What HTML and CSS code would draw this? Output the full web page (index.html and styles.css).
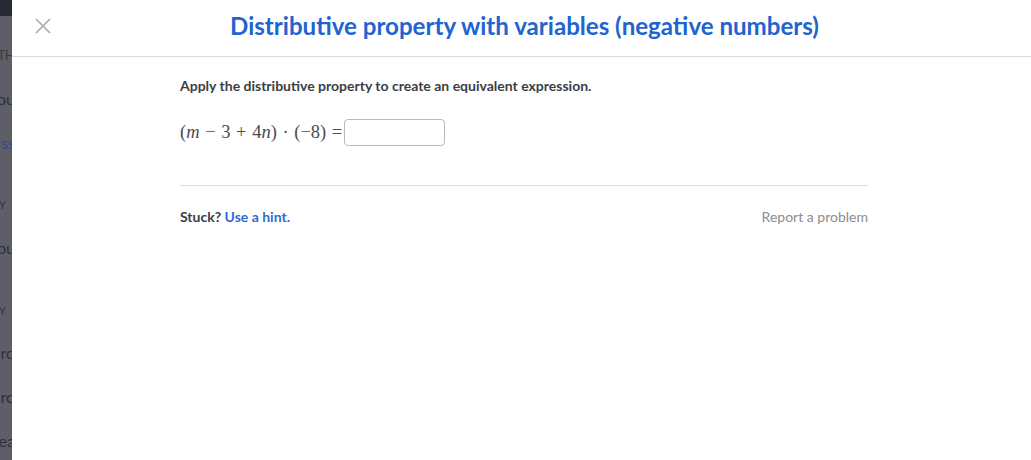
FILE: index.html
```html
<!DOCTYPE html>
<html>
<head>
<meta charset="utf-8">
<link rel="stylesheet" href="styles.css">
</head>
<body>
<div class="page">
  <aside class="backdrop">
    <div class="backdrop-top"></div>
    <div class="frag frag-th">TH</div>
    <div class="frag frag-ou">ou</div>
    <div class="frag frag-ss">ss</div>
    <div class="frag frag-y">Y</div>
    <div class="frag frag-ou2">ou</div>
    <div class="frag frag-y2">Y</div>
    <div class="frag frag-ro">ro</div>
    <div class="frag frag-ro2">ro</div>
    <div class="frag frag-ea">ea</div>
  </aside>
  <main class="modal">
    <header class="modal-header">
      <button class="close" aria-label="Close">
        <svg width="16" height="16" viewBox="0 0 16 16"><path d="M1 1 L15 15 M15 1 L1 15" stroke="#a9aaad" stroke-width="1.6" fill="none"/></svg>
      </button>
      <h1 class="title">Distributive property with variables (negative numbers)</h1>
    </header>
    <section class="content">
      <p class="prompt">Apply the distributive property to create an equivalent expression.</p>
      <div class="equation">
        <span class="math">(<i>m</i> − 3 + 4<i>n</i>) · (−8) =</span>
        <span class="answer"></span>
      </div>
      <div class="divider"></div>
      <div class="footer">
        <span class="stuck">Stuck? <a class="hint">Use a hint.</a></span>
        <a class="report">Report a problem</a>
      </div>
    </section>
  </main>
</div>
</body>
</html>
```

FILE: styles.css
```css
* { box-sizing: border-box; }
html, body { margin: 0; padding: 0; }
body {
  width: 1031px;
  height: 460px;
  overflow: hidden;
  background: #fff;
  font-family: Lato, "Noto Sans", sans-serif;
  color: #21242c;
}
.page {
  display: flex;
  height: 460px;
}
.backdrop {
  width: 12px;
  flex: none;
  background: #5e5f66;
  overflow: hidden;
  display: flex;
  flex-direction: column;
  align-items: flex-end;
  font-family: Lato, sans-serif;
  color: #2f313a;
  font-size: 16px;
  line-height: 20px;
}
.backdrop-top {
  width: 12px;
  height: 16px;
  background: #272a33;
  flex: none;
}
.frag { white-space: nowrap; margin-right: -3px; }
.frag-th { margin-top: 29px; font-size: 13px; color: #3a3c45; }
.frag-ou { margin-top: 24px; }
.frag-ss { margin-top: 24px; color: #2f4a8a; }
.frag-y { margin-top: 42px; font-size: 11px; align-self: flex-start; margin-left: -1px; }
.frag-ou2 { margin-top: 23px; }
.frag-y2 { margin-top: 43px; font-size: 11px; align-self: flex-start; margin-left: -1px; }
.frag-ro { margin-top: 22px; }
.frag-ro2 { margin-top: 24px; }
.frag-ea { margin-top: 24px; }

.modal {
  flex: 1;
  display: flex;
  flex-direction: column;
}
.modal-header {
  height: 57px;
  border-bottom: 1px solid #dadadd;
  display: flex;
  align-items: center;
  position: relative;
}
.close {
  position: absolute;
  left: 22px;
  top: 17px;
  width: 18px;
  height: 18px;
  padding: 0;
  border: 0;
  background: none;
  display: flex;
  align-items: center;
  justify-content: center;
}
.title {
  flex: 1;
  margin: 0 0 6px 0;
  padding-left: 6px;
  text-align: center;
  font-size: 24.1px;
  font-weight: 700;
  color: #2164d0;
}
.content {
  width: 688px;
  margin-left: 168px;
  padding-top: 20px;
}
.prompt {
  margin: 0;
  font-size: 14px;
  font-weight: 700;
  line-height: 18px;
  color: #3b3e45;
}
.equation {
  display: flex;
  align-items: center;
  margin-top: 23px;
  height: 28px;
}
.math {
  font-family: "Liberation Serif", "DejaVu Serif", serif;
  font-size: 18.5px;
  color: #4a4c52;
  white-space: nowrap;
  word-spacing: 1px;
}
.math i { font-style: italic; }
.answer {
  margin-left: 2px;
  width: 101px;
  height: 27px;
  border: 1px solid #b9babd;
  border-radius: 4px;
  background: #fff;
}
.divider {
  margin-top: 39px;
  border-top: 1px solid #dcdcde;
}
.footer {
  display: flex;
  justify-content: space-between;
  align-items: center;
  margin-top: 22px;
  font-size: 14px;
  line-height: 18px;
}
.stuck { font-weight: 700; color: #3b3e45; }
.hint { color: #2e6ad3; font-weight: 700; }
.report { color: #8b8c90; }
```
